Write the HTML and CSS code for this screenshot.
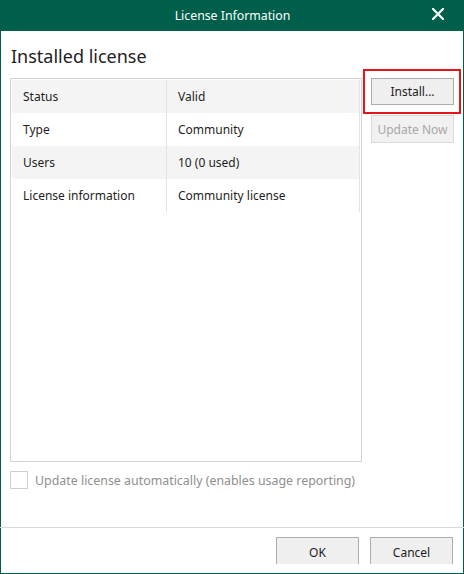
FILE: index.html
```html
<!DOCTYPE html>
<html>
<head>
<meta charset="utf-8">
<link rel="stylesheet" href="styles.css">
</head>
<body>
<div class="window">
  <div class="titlebar">
    <span class="title">License Information</span>
    <svg class="close" width="12" height="12" viewBox="0 0 12 12"><path d="M1 1L11 11M11 1L1 11" stroke="#fff" stroke-width="2.2" stroke-linecap="square"/></svg>
  </div>
  <div class="body">
    <div class="left">
      <div class="heading">Installed license</div>
      <div class="table">
        <div class="row alt"><div class="c1">Status</div><div class="c2">Valid</div></div>
        <div class="row"><div class="c1">Type</div><div class="c2">Community</div></div>
        <div class="row alt"><div class="c1">Users</div><div class="c2">10 (0 used)</div></div>
        <div class="row"><div class="c1">License information</div><div class="c2">Community license</div></div>
      </div>
      <div class="check">
        <span class="box"></span>
        <span class="label">Update license automatically (enables usage reporting)</span>
      </div>
    </div>
    <div class="right">
      <div class="highlight-wrap">
        <button class="btn">Install...</button>
        <span class="highlight"></span>
      </div>
      <button class="btn disabled">Update Now</button>
    </div>
  </div>
  <div class="footer">
    <button class="btn foot">OK</button>
    <button class="btn foot">Cancel</button>
  </div>
</div>
</body>
</html>
```
FILE: styles.css
```css
html, body {
  margin: 0;
  padding: 0;
  background: #fff;
}
body {
  font-family: "Noto Sans", "Open Sans", "DejaVu Sans", sans-serif;
  font-size: 12px;
  color: #1e1e1e;
}
.window {
  width: 464px;
  height: 574px;
  box-sizing: border-box;
  border: 1px solid #005f4b;
  border-top: none;
  display: flex;
  flex-direction: column;
  background: #fff;
}
.titlebar {
  height: 31px;
  flex: none;
  background: #005f4b;
  margin: 0 -1px;
  display: flex;
  align-items: center;
  justify-content: center;
  position: relative;
}
.title {
  color: #fff;
  font-size: 12.3px;
  line-height: 33px;
  padding-left: 1px;
}
.close {
  position: absolute;
  right: 20px;
  top: 8px;
}
.body {
  height: 496px;
  flex: none;
  display: flex;
  padding-left: 9px;
}
.left {
  width: 352px;
  display: flex;
  flex-direction: column;
}
.heading {
  margin: 13px 0 10px 1px;
  font-size: 18px;
  line-height: 24px;
  color: #222;
}
.table {
  height: 384px;
  box-sizing: border-box;
  border: 1px solid #d2d2d2;
  padding: 1px;
}
.row {
  display: flex;
  height: 33px;
  line-height: 33px;
}
.row.alt {
  background: #f4f4f4;
}
.c1 {
  width: 155px;
  box-sizing: border-box;
  border-right: 1px solid #e4e4e4;
  padding-left: 11px;
}
.c2 {
  width: 193px;
  box-sizing: border-box;
  border-right: 1px solid #e4e4e4;
  padding-left: 11px;
}
.check {
  margin-top: 9px;
  display: flex;
  align-items: center;
  gap: 7px;
}
.box {
  width: 18px;
  height: 18px;
  box-sizing: border-box;
  border: 1px solid #cfcfcf;
  background: #fff;
}
.label {
  color: #8f8f8f;
  font-size: 12.4px;
}
.right {
  margin-left: 9px;
  padding-top: 47px;
  display: flex;
  flex-direction: column;
  gap: 10px;
}
.highlight-wrap {
  position: relative;
}
.btn {
  width: 83px;
  height: 27px;
  box-sizing: border-box;
  border: 1px solid #adadad;
  background: #efefef;
  font-family: inherit;
  font-size: 12px;
  color: #1e1e1e;
  padding: 0;
  margin: 0;
  display: block;
}
.btn.disabled {
  height: 28px;
  border-color: #dadada;
  color: #a8a8a8;
  background: #f1f1f1;
}
.highlight {
  position: absolute;
  left: -8px;
  top: -9px;
  width: 98px;
  height: 45px;
  box-sizing: border-box;
  border: 2px solid #e8141b;
}
.footer {
  flex: 1;
  border-top: 1px solid #d6d6d6;
  margin: 0 -1px;
  padding: 9px 11px 0 0;
  display: flex;
  justify-content: flex-end;
  align-items: flex-start;
  gap: 11px;
}
.btn.foot {
  height: 27px;
  border-bottom: none;
  padding-top: 2px;
}
```
